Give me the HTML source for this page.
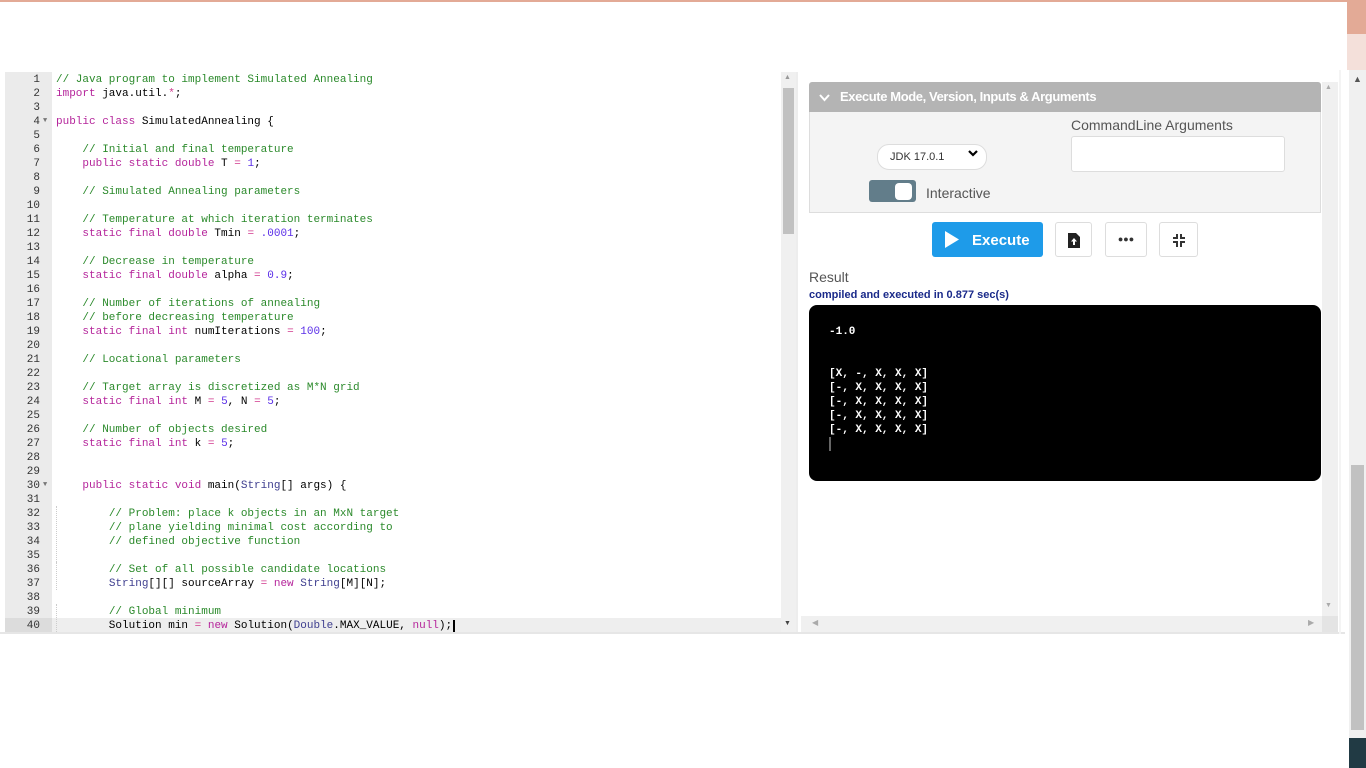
<!DOCTYPE html>
<html><head><meta charset="utf-8"><style>
body{margin:0;width:1366px;height:768px;background:#fff;position:relative;overflow:hidden;font-family:"Liberation Sans",sans-serif}
.abs{position:absolute}
#code{position:absolute;left:5px;top:72px;width:776px;height:560px;font-family:"Liberation Mono",monospace;font-size:11px}
.ln{height:14px;line-height:16px;white-space:pre;position:relative}
.g{position:absolute;left:0;width:47px;height:14px;background:#ebebeb;color:#333;text-align:left}
.g span{display:inline-block;width:35px;text-align:right}
.t{position:absolute;left:51px;color:#000}
.c{color:#2b8a2b}.k{color:#b5259b}.n{color:#5a2ee8}.o{color:#d0388d}.ty{color:#3f3f8f}
.cur .g{background:#dcdcdc}.cur{background:#eeeeee}
.fold{font-size:7px;color:#777;position:absolute;left:38px;top:-1px;font-style:normal}
.btn{position:absolute;top:222px;height:35px;border:1px solid #ddd;border-radius:3px;background:#fff;box-sizing:border-box}
.term{font-family:"Liberation Mono",monospace;font-size:11px;font-weight:bold;color:#fff;white-space:pre;line-height:14px}
</style></head><body>
<div class="abs" style="left:0;top:0;width:1366px;height:2px;background:#e3aa96"></div>
<div class="abs" style="left:1347px;top:0;width:19px;height:34px;background:#e3aa96"></div>
<div class="abs" style="left:1347px;top:34px;width:19px;height:36px;background:#f4e0da"></div>
<div class="abs" style="left:1349px;top:70px;width:17px;height:668px;background:#f0f0f0"></div>
<div class="abs" style="left:1351px;top:465px;width:13px;height:265px;background:#c1c1c1"></div>
<div class="abs" style="left:1349px;top:738px;width:17px;height:30px;background:#213a44"></div>
<div class="abs" style="left:1353px;top:74px;font-size:9px;color:#555">▲</div>

<div id="code">
<div class="ln"><div class="g"><span>1</span></div><div class="t"><span class="c">// Java program to implement Simulated Annealing</span></div></div>
<div class="ln"><div class="g"><span>2</span></div><div class="t"><span class="k">import</span> java.util.<span class="o">*</span>;</div></div>
<div class="ln"><div class="g"><span>3</span></div></div>
<div class="ln"><div class="g"><span>4</span><i class="fold">▼</i></div><div class="t"><span class="k">public class</span> SimulatedAnnealing {</div></div>
<div class="ln"><div class="g"><span>5</span></div></div>
<div class="ln"><div class="g"><span>6</span></div><div class="t">    <span class="c">// Initial and final temperature</span></div></div>
<div class="ln"><div class="g"><span>7</span></div><div class="t">    <span class="k">public static double</span> T <span class="o">=</span> <span class="n">1</span>;</div></div>
<div class="ln"><div class="g"><span>8</span></div></div>
<div class="ln"><div class="g"><span>9</span></div><div class="t">    <span class="c">// Simulated Annealing parameters</span></div></div>
<div class="ln"><div class="g"><span>10</span></div></div>
<div class="ln"><div class="g"><span>11</span></div><div class="t">    <span class="c">// Temperature at which iteration terminates</span></div></div>
<div class="ln"><div class="g"><span>12</span></div><div class="t">    <span class="k">static final double</span> Tmin <span class="o">=</span> <span class="n">.0001</span>;</div></div>
<div class="ln"><div class="g"><span>13</span></div></div>
<div class="ln"><div class="g"><span>14</span></div><div class="t">    <span class="c">// Decrease in temperature</span></div></div>
<div class="ln"><div class="g"><span>15</span></div><div class="t">    <span class="k">static final double</span> alpha <span class="o">=</span> <span class="n">0.9</span>;</div></div>
<div class="ln"><div class="g"><span>16</span></div></div>
<div class="ln"><div class="g"><span>17</span></div><div class="t">    <span class="c">// Number of iterations of annealing</span></div></div>
<div class="ln"><div class="g"><span>18</span></div><div class="t">    <span class="c">// before decreasing temperature</span></div></div>
<div class="ln"><div class="g"><span>19</span></div><div class="t">    <span class="k">static final int</span> numIterations <span class="o">=</span> <span class="n">100</span>;</div></div>
<div class="ln"><div class="g"><span>20</span></div></div>
<div class="ln"><div class="g"><span>21</span></div><div class="t">    <span class="c">// Locational parameters</span></div></div>
<div class="ln"><div class="g"><span>22</span></div></div>
<div class="ln"><div class="g"><span>23</span></div><div class="t">    <span class="c">// Target array is discretized as M*N grid</span></div></div>
<div class="ln"><div class="g"><span>24</span></div><div class="t">    <span class="k">static final int</span> M <span class="o">=</span> <span class="n">5</span>, N <span class="o">=</span> <span class="n">5</span>;</div></div>
<div class="ln"><div class="g"><span>25</span></div></div>
<div class="ln"><div class="g"><span>26</span></div><div class="t">    <span class="c">// Number of objects desired</span></div></div>
<div class="ln"><div class="g"><span>27</span></div><div class="t">    <span class="k">static final int</span> k <span class="o">=</span> <span class="n">5</span>;</div></div>
<div class="ln"><div class="g"><span>28</span></div></div>
<div class="ln"><div class="g"><span>29</span></div></div>
<div class="ln"><div class="g"><span>30</span><i class="fold">▼</i></div><div class="t">    <span class="k">public static void</span> main(<span class="ty">String</span>[] args) {</div></div>
<div class="ln"><div class="g"><span>31</span></div></div>
<div class="ln"><div class="g"><span>32</span></div><div class="t">        <span class="c">// Problem: place k objects in an MxN target</span></div></div>
<div class="ln"><div class="g"><span>33</span></div><div class="t">        <span class="c">// plane yielding minimal cost according to</span></div></div>
<div class="ln"><div class="g"><span>34</span></div><div class="t">        <span class="c">// defined objective function</span></div></div>
<div class="ln"><div class="g"><span>35</span></div></div>
<div class="ln"><div class="g"><span>36</span></div><div class="t">        <span class="c">// Set of all possible candidate locations</span></div></div>
<div class="ln"><div class="g"><span>37</span></div><div class="t">        <span class="ty">String</span>[][] sourceArray <span class="o">=</span> <span class="k">new</span> <span class="ty">String</span>[M][N];</div></div>
<div class="ln"><div class="g"><span>38</span></div></div>
<div class="ln"><div class="g"><span>39</span></div><div class="t">        <span class="c">// Global minimum</span></div></div>
<div class="ln cur"><div class="g"><span>40</span></div><div class="t">        Solution min <span class="o">=</span> <span class="k">new</span> Solution(<span class="ty">Double</span>.MAX_VALUE, <span class="k">null</span>);<span style="border-left:2px solid #000;margin-left:1px"></span></div></div>
</div>
<div class="abs" style="left:56px;top:506px;width:0;height:56px;border-left:1px dotted #ccc"></div>
<div class="abs" style="left:56px;top:562px;width:0;height:28px;border-left:1px dotted #ccc"></div>
<div class="abs" style="left:56px;top:604px;width:0;height:28px;border-left:1px dotted #ccc"></div>
<!-- editor scrollbar -->
<div class="abs" style="left:781px;top:72px;width:15px;height:560px;background:#f0f0f0"></div>
<div class="abs" style="left:783px;top:88px;width:11px;height:146px;background:#c1c1c1"></div>
<div class="abs" style="left:784px;top:74px;font-size:7px;color:#999">▲</div>
<div class="abs" style="left:784px;top:620px;font-size:7px;color:#444">▼</div>
<div class="abs" style="left:796px;top:72px;width:2px;height:560px;background:#ededed"></div>

<!-- right panel -->
<div class="abs" style="left:809px;top:82px;width:512px;height:30px;background:#b4b4b4;border-radius:3px 3px 0 0;color:#fff;font-weight:bold;font-size:13px;line-height:30px;letter-spacing:-0.4px"><svg style="margin:0 10px 0 10px;vertical-align:middle" width="11" height="8"><path d="M1 1L5.5 6L10 1" stroke="#fff" stroke-width="2" fill="none"/></svg>Execute Mode, Version, Inputs &amp; Arguments</div>
<div class="abs" style="left:809px;top:112px;width:510px;height:100px;background:#f4f4f4;border:1px solid #ddd;border-top:none"></div>
<div class="abs" style="left:877px;top:144px;width:108px;height:24px;background:#fff;border:1px solid #ddd;border-radius:12px;font-size:11px;line-height:24px;color:#333"><span style="margin-left:12px">JDK 17.0.1</span><svg class="abs" style="right:8px;top:5px" width="10" height="8"><path d="M1 1L5 5L9 1" stroke="#000" stroke-width="2.2" fill="none"/></svg></div>
<div class="abs" style="left:1071px;top:117px;font-size:14px;color:#555">CommandLine Arguments</div>
<div class="abs" style="left:1071px;top:136px;width:212px;height:34px;background:#fff;border:1px solid #ddd;border-radius:3px"></div>
<div class="abs" style="left:869px;top:180px;width:47px;height:22px;background:#627d8a;border-radius:3px"></div>
<div class="abs" style="left:895px;top:183px;width:17px;height:17px;background:#fff;border-radius:4px"></div>
<div class="abs" style="left:926px;top:185px;font-size:14px;color:#555">Interactive</div>

<div class="abs" style="left:932px;top:222px;width:111px;height:35px;background:#1e9be9;border-radius:3px;color:#fff;font-weight:bold;font-size:15px;line-height:37px"><svg class="abs" style="left:12px;top:9px" width="16" height="17"><path d="M1 0L15 8.5L1 17Z" fill="#fff"/></svg><span style="margin-left:40px">Execute</span></div>
<div class="btn" style="left:1055px;width:37px"><svg class="abs" style="left:12px;top:10px" width="12" height="15"><path d="M0 0H8L12 4V15H0Z" fill="#222"/><path d="M6 5L3 8.5H5V12H7V8.5H9Z" fill="#fff"/></svg></div>
<div class="btn" style="left:1105px;width:42px;font-size:9px;text-align:center;line-height:33px;color:#333">●●●</div>
<div class="btn" style="left:1159px;width:39px"><svg class="abs" style="left:12px;top:11px" width="14" height="13" stroke="#333" stroke-width="2" fill="none"><path d="M5 0V4H1M9 0V4H13M5 13V8H1M9 13V8H13"/></svg></div>

<div class="abs" style="left:809px;top:269px;font-size:14px;color:#555">Result</div>
<div class="abs" style="left:809px;top:289px;font-size:11px;color:#1a2a8a;font-weight:bold">compiled and executed in 0.877 sec(s)</div>
<div class="abs" style="left:809px;top:305px;width:512px;height:176px;background:#000;border-radius:8px"></div>
<div class="abs term" style="left:829px;top:325px">-1.0


[X, -, X, X, X]
[-, X, X, X, X]
[-, X, X, X, X]
[-, X, X, X, X]
[-, X, X, X, X]</div>
<div class="abs" style="left:829px;top:437px;width:2px;height:14px;background:#666"></div>

<div class="abs" style="left:1322px;top:82px;width:16px;height:534px;background:#f0f0f0"></div>
<div class="abs" style="left:1325px;top:84px;font-size:7px;color:#aaa">▲</div>
<div class="abs" style="left:1325px;top:602px;font-size:7px;color:#aaa">▼</div>
<div class="abs" style="left:801px;top:616px;width:537px;height:16px;background:#f0f0f0"></div>
<div class="abs" style="left:812px;top:618px;font-size:8px;color:#aaa">◀</div>
<div class="abs" style="left:1308px;top:618px;font-size:8px;color:#aaa">▶</div>
<div class="abs" style="left:1322px;top:616px;width:16px;height:16px;background:#e4e4e4"></div>
<div class="abs" style="left:0;top:632px;width:1345px;height:2px;background:#e6e6e6"></div>
<div class="abs" style="left:1339px;top:70px;width:2px;height:564px;background:#f4f4f4"></div>
</body></html>
